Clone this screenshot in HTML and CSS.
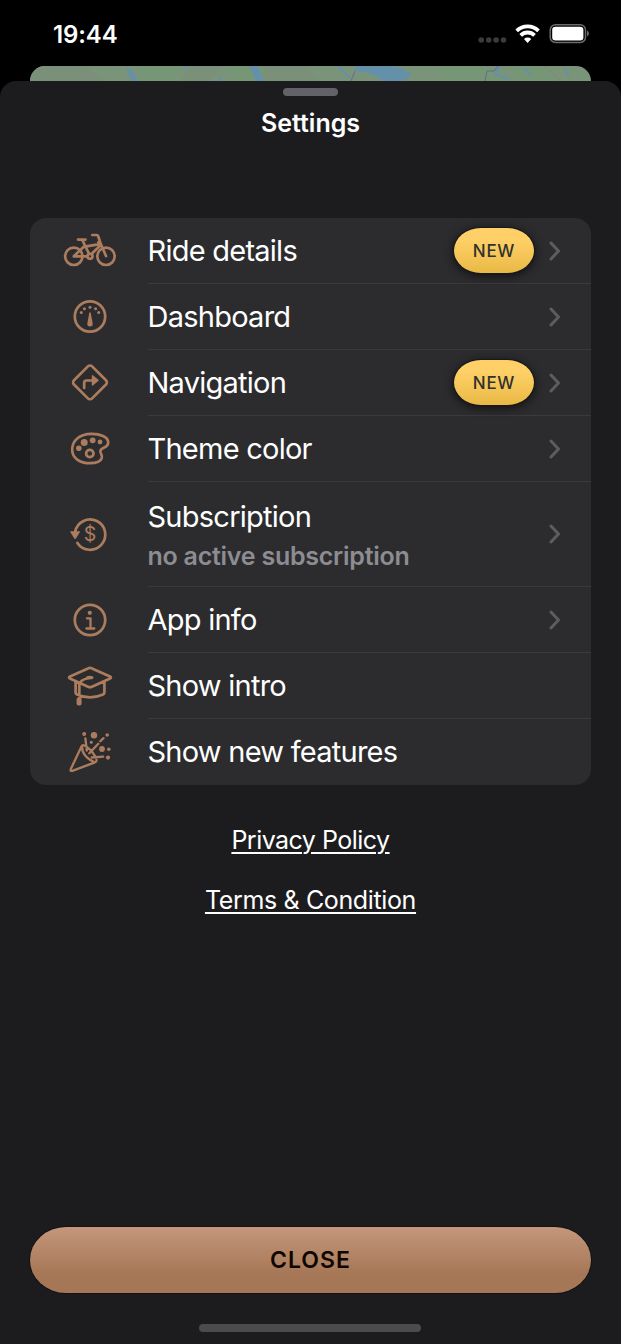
FILE: index.html
```html
<!DOCTYPE html>
<html lang="en">
<head>
<meta charset="utf-8">
<title>Settings</title>
<link rel="stylesheet" href="styles.css">
</head>
<body>
<div class="screen">
  <header class="status">
    <span class="time">19:44</span>
    <svg class="status-icons" viewBox="0 0 114 24" width="114" height="24">
      <g fill="#3b3b3c"><circle cx="4.200" cy="18" r="2.800"/><circle cx="11.700" cy="18" r="2.800"/><circle cx="19.100" cy="18" r="2.800"/><circle cx="26.500" cy="18" r="2.800"/></g>
      <g fill="none" stroke="#fff" stroke-width="3.800"><path d="M39.700 8.800a15.800 15.800 0 0 1 21.800 0"/><path d="M43.700 13.300a9.900 9.900 0 0 1 13.800 0"/></g>
      <path d="M47 17a5.300 5.300 0 0 1 7.200 0L50.600 20.900z" fill="#fff"/>
      <rect x="73.200" y="2.800" width="35.300" height="17.600" rx="5.200" fill="none" stroke="#6a6a6b" stroke-width="1.500"/>
      <rect x="75.200" y="4.800" width="31.200" height="13.600" rx="3.200" fill="#fff"/>
      <path d="M110 8.500q2 .8 2 3t-2 3z" fill="#6a6a6b"/>
    </svg>
  </header>
  <svg class="map" viewBox="0 0 561 30" width="561" height="30">
    <rect width="561" height="30" fill="#7a947a"/>
    <path d="M0 0h55l20 15H0zM160 0h32l-12 15h-30zM236 0h42l12 15h-60z" fill="#7b9079"/>
    <path d="M110 0h42l-10 15h-32zM195 0h40l-5 15h-25zM405 0h52l20 15h-60zM480 0h30l20 15h-40z" fill="#769775"/>
    <g fill="#6590a9"><path d="M97 1l5 4 6 10h-6l-5-10zM219 0h9l6 15h-8zM325 0h38q16 4 18 9-3 4-10 6h-18q-12-10-28-10zM154 0h4l-1 5zM188 15l4-7-1 7z"/></g>
    <g fill="none" stroke="#6590a9" stroke-width="2"><path d="M308 0l12 12M470 0l-5 8 14 5M494 2l7 8M534 2l5 8"/></g>
    <path d="M468 0l-4 5h-7l-2 10M325 5l-4 10" fill="none" stroke="#646c91"/>
    <path d="M515 0l15 15" fill="none" stroke="#9a7774" stroke-dasharray="4 2"/>
  </svg>
  <main class="sheet">
    <div class="grabber"></div>
    <h1 class="title">Settings</h1>
    <section class="card">
      <div class="row">
        <svg class="icon" viewBox="0 0 60 66"><circle cx="13.800" cy="39.300" r="8.700"/><circle cx="46" cy="39.300" r="8.700"/><circle cx="30" cy="39.300" r="2.500"/><path d="M18 22.600h7.500M22.300 23l6.600 13.500M32.300 18h4.300q1.200 0 1.600 1.200l1.600 4.800-1.500 1.500M40 25l6 14M23.500 29.800l16-2.700M40.800 28L31.500 37M13.800 39.300L23.500 30M13.800 39.300H27"/></svg>
        <div class="body"><span class="label">Ride details</span><span class="badge">NEW</span><svg class="chevron" viewBox="0 0 14 20"><path d="M3 2l7.500 8L3 18"/></svg></div>
      </div>
      <div class="row">
        <svg class="icon" viewBox="0 0 60 66"><circle cx="30" cy="33.500" r="15.200"/><g class="solid"><circle cx="21.300" cy="29.500" r="1.500"/><circle cx="24.400" cy="25.800" r="1.500"/><circle cx="30" cy="24.200" r="1.500"/><circle cx="35.600" cy="25.800" r="1.500"/><circle cx="38.700" cy="29.500" r="1.500"/><path d="M30 29.300q.7 0 .8 1l1.900 10.500q.2 2.700-2.700 2.800-2.900-.1-2.700-2.800L29.200 30.300q.1-1 .8-1z"/></g></svg>
        <div class="body"><span class="label">Dashboard</span><svg class="chevron" viewBox="0 0 14 20"><path d="M3 2l7.500 8L3 18"/></svg></div>
      </div>
      <div class="row">
        <svg class="icon" viewBox="0 0 60 66"><rect x="17.200" y="20.600" width="25.600" height="25.600" rx="3" transform="rotate(45 30 33.400)"/><path d="M24.200 39v-5.200q0-2.300 2.300-2.300H32"/><path class="solid" d="M31.800 26.800q0-1.300 1-.5l5.600 4.500q.8.600 0 1.200l-5.600 4.500q-1 .8-1-.5z"/></svg>
        <div class="body"><span class="label">Navigation</span><span class="badge">NEW</span><svg class="chevron" viewBox="0 0 14 20"><path d="M3 2l7.500 8L3 18"/></svg></div>
      </div>
      <div class="row">
        <svg class="icon" viewBox="0 0 60 66"><path d="M31 18.800c9-.2 17.200 3 17.200 8.600 0 6.200-7.300 4.500-7.800 8.600-.3 2.800 2.600 4 1.300 7.300-1 2.800-5.600 4.900-11.500 4.900-10.600 0-18-5.200-18-13.400 0-10.400 8.800-15.800 18.800-16z"/><circle cx="29.800" cy="38.500" r="3.700"/><g class="solid"><circle cx="18.800" cy="33.200" r="2.800"/><circle cx="24.200" cy="27.600" r="3.500"/><circle cx="32.700" cy="25.300" r="2.900"/><circle cx="40" cy="27" r="2.400"/></g></svg>
        <div class="body"><span class="label">Theme color</span><svg class="chevron" viewBox="0 0 14 20"><path d="M3 2l7.500 8L3 18"/></svg></div>
      </div>
      <div class="row tall">
        <svg class="icon" viewBox="0 0 60 106"><path d="M15.200 50.500a15.200 15.200 0 1 1 2.200 11.500"/><path class="solid" d="M11 50.200h8.200q1.200 0 .6 1l-3.900 6.300q-.8 1.200-1.600 0l-3.900-6.300q-.6-1 .6-1z"/><text class="dollar" x="30" y="60.300">$</text></svg>
        <div class="body"><span class="label">Subscription<small class="note">no active subscription</small></span><svg class="chevron" viewBox="0 0 14 20"><path d="M3 2l7.500 8L3 18"/></svg></div>
      </div>
      <div class="row lower">
        <svg class="icon" viewBox="0 0 60 66"><circle cx="30" cy="33" r="15.200"/><circle class="solid" cx="29.800" cy="25.800" r="2.100"/><path class="info" d="M26.900 31.300h3.600v10.200M26.400 41.500h7.900"/></svg>
        <div class="body"><span class="label">App info</span><svg class="chevron" viewBox="0 0 14 20"><path d="M3 2l7.500 8L3 18"/></svg></div>
      </div>
      <div class="row lower">
        <svg class="icon" viewBox="0 0 60 66"><path d="M28 15.400q2-1 4 0l18 8.100q1.900 1 0 2L32 33.700q-2 .9-4 0L10 25.500q-1.900-1 0-2zM15.600 29v10.500q0 1.400 1.400 2 13 5.800 26 0 1.400-.6 1.400-2V29M28 25.300q-8 1.600-8.700 6.500V46"/><g class="solid"><ellipse cx="29.800" cy="24.600" rx="3.700" ry="1.900"/><rect x="16.600" y="44.500" width="5" height="8" rx="2"/></g></svg>
        <div class="body"><span class="label">Show intro</span></div>
      </div>
      <div class="row lower last">
        <svg class="icon" viewBox="0 0 60 66"><g class="thin"><path d="M21.500 27.500L10.800 50q-.8 2.400 1.500 1.800L35 43.300q2.800-1.300.5-5.500-5.400-9-11.200-11.300-2-.7-2.800 1zM22 27q-.2 10.700 12.500 16.200M25.400 19.500l1.400 12M29.300 34.300l9-9.500M40.300 22.300l3.200-3.200M31.700 38.500l11.500-.8"/></g><g class="solid"><circle cx="24.200" cy="15" r="2"/><circle cx="34" cy="16.300" r="3.200"/><circle cx="47.200" cy="16" r="1.800"/><circle cx="31.300" cy="23.200" r="1.500"/><circle cx="42" cy="30" r="2.900"/><circle cx="48.800" cy="30.300" r="1.800"/><circle cx="48" cy="38.600" r="2.100"/></g></svg>
        <div class="body"><span class="label">Show new features</span></div>
      </div>
    </section>
    <nav class="links">
      <a class="link privacy">Privacy Policy</a>
      <a class="link terms">Terms &amp; Condition</a>
    </nav>
    <button class="close">CLOSE</button>
    <div class="home"></div>
  </main>
</div>
</body>
</html>
```
FILE: styles.css
```css
* { box-sizing: border-box; }
body { margin: 0; background: #000; color: #fff; font-family: Inter, "Liberation Sans", sans-serif; }
.screen { width: 621px; height: 1344px; display: flex; flex-direction: column; overflow: hidden; background: #000; }
.status { height: 66px; flex: none; display: flex; justify-content: space-between; padding: 22px 30px 0 53px; }
.time { font-size: 24px; font-weight: 600; line-height: 25px; letter-spacing: -.1px; }
.status-icons { display: block; }
.map { display: block; flex: none; margin: 0 30px -15px; border-radius: 15px 15px 0 0; }
.sheet { position: relative; flex: 1; display: flex; flex-direction: column; align-items: center; padding: 7px 30px 12px; background: #1c1c1e; border-radius: 16px 16px 0 0; }
.grabber { width: 55px; height: 8px; border-radius: 4px; background: #636269; flex: none; }
.title { margin: 11px 0 0; height: 32px; font-size: 25px; line-height: 32px; font-weight: 600; letter-spacing: 0; }
.card { width: 561px; margin-top: 79px; border-radius: 16px; background: #2c2c2e; overflow: hidden; }
.row { display: flex; height: 66px; padding-left: 30px; }
.row.tall { height: 105px; }
.icon { width: 60px; height: 66px; flex: none; margin: -.7px 27.500px 0 0; fill: none; stroke: #ac7c5e; stroke-width: 2.700; stroke-linecap: round; stroke-linejoin: round; }
.tall .icon { height: 106px; }
.lower .icon { margin-top: .3px; }
.solid { fill: #ac7c5e; stroke: none; }
.thin { stroke-width: 2.300; }
.info { stroke-width: 2.300; }
.dollar { fill: #ac7c5e; stroke: none; font: 400 19.500px Inter, sans-serif; text-anchor: middle; }
.body { flex: 1; display: flex; align-items: center; padding-right: 29px; border-bottom: 1px solid #3a3a3d; }
.last .body { border-color: transparent; }
.label { flex: 1; font-size: 29px; line-height: 38px; letter-spacing: -.75px; }
.tall .label { padding-top: 4px; }
.note { display: block; margin-top: 1px; font-size: 25px; font-weight: 600; letter-spacing: -.25px; color: #8d8c93; }
.badge { width: 80px; height: 45px; margin-right: 14px; border-radius: 27px / 22.500px; background: linear-gradient(#ffd067 25%, #e9b946); box-shadow: 0 0 0 1px #18181a, 0 2px 9px 1px #111113; color: #30322e; font-size: 17px; line-height: 46px; font-weight: 500; letter-spacing: .7px; text-align: center; }
.chevron { width: 14px; height: 20px; fill: none; stroke: #5d5d60; stroke-width: 3; stroke-linecap: round; stroke-linejoin: round; }
.links { display: flex; flex-direction: column; align-items: center; gap: 28px; margin-top: 39px; }
.link { font-size: 25px; line-height: 32px; letter-spacing: -.36px; text-decoration: underline; text-decoration-thickness: 2px; text-underline-offset: 3px; }
.privacy { letter-spacing: -.52px; }
.close { width: 561px; height: 66px; flex: none; margin-top: auto; padding: 0; border: 0; border-radius: 36px / 33px; background: linear-gradient(#c4967b, #a67756 72%); box-shadow: 0 0 0 1px #131314; color: #0d0600; font: 600 23px/66px Inter, sans-serif; letter-spacing: 1px; }
.home { width: 222px; height: 8px; flex: none; margin: 31px 1px 0 0; border-radius: 4px; background: #4b4b4c; }
```
